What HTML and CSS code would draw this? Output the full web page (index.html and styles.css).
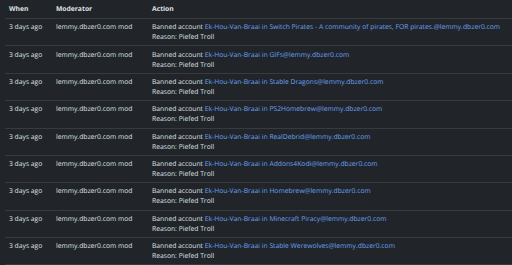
FILE: index.html
```html
<!DOCTYPE html>
<html>
<head>
<meta charset="utf-8">
<link rel="stylesheet" href="styles.css">
</head>
<body>
<table class="log">
<thead>
<tr><th class="c-when">When</th><th class="c-mod">Moderator</th><th class="c-act">Action</th></tr>
</thead>
<tbody>
<tr><td>3 days ago</td><td>lemmy.dbzer0.com mod</td><td>Banned account <a href="#">Ek-Hou-Van-Braai</a> <a href="#">in Switch Pirates - A community of pirates, FOR pirates.@lemmy.dbzer0.com</a><br>Reason: Piefed Troll</td></tr>
<tr><td>3 days ago</td><td>lemmy.dbzer0.com mod</td><td>Banned account <a href="#">Ek-Hou-Van-Braai</a> <a href="#">in GIFs@lemmy.dbzer0.com</a><br>Reason: Piefed Troll</td></tr>
<tr><td>3 days ago</td><td>lemmy.dbzer0.com mod</td><td>Banned account <a href="#">Ek-Hou-Van-Braai</a> <a href="#">in Stable Dragons@lemmy.dbzer0.com</a><br>Reason: Piefed Troll</td></tr>
<tr><td>3 days ago</td><td>lemmy.dbzer0.com mod</td><td>Banned account <a href="#">Ek-Hou-Van-Braai</a> <a href="#">in PS2Homebrew@lemmy.dbzer0.com</a><br>Reason: Piefed Troll</td></tr>
<tr><td>3 days ago</td><td>lemmy.dbzer0.com mod</td><td>Banned account <a href="#">Ek-Hou-Van-Braai</a> <a href="#">in RealDebrid@lemmy.dbzer0.com</a><br>Reason: Piefed Troll</td></tr>
<tr><td>3 days ago</td><td>lemmy.dbzer0.com mod</td><td>Banned account <a href="#">Ek-Hou-Van-Braai</a> <a href="#">in Addons4Kodi@lemmy.dbzer0.com</a><br>Reason: Piefed Troll</td></tr>
<tr><td>3 days ago</td><td>lemmy.dbzer0.com mod</td><td>Banned account <a href="#">Ek-Hou-Van-Braai</a> <a href="#">in Homebrew@lemmy.dbzer0.com</a><br>Reason: Piefed Troll</td></tr>
<tr><td>3 days ago</td><td>lemmy.dbzer0.com mod</td><td>Banned account <a href="#">Ek-Hou-Van-Braai</a> <a href="#">in Minecraft Piracy@lemmy.dbzer0.com</a><br>Reason: Piefed Troll</td></tr>
<tr><td>3 days ago</td><td>lemmy.dbzer0.com mod</td><td>Banned account <a href="#">Ek-Hou-Van-Braai</a> <a href="#">in Stable Werewolves@lemmy.dbzer0.com</a><br>Reason: Piefed Troll</td></tr>
</tbody>
</table>
</body>
</html>
```
FILE: styles.css
```css
html, body {
  margin: 0;
  padding: 0;
  background: #212529;
}
body {
  color: #dee2e6;
  font-family: "Open Sans", "Noto Sans", sans-serif;
  font-size: 6.75px;
  line-height: 10px;
  text-rendering: geometricPrecision;
}
.log {
  border-collapse: collapse;
  table-layout: fixed;
  margin-left: 5px;
  width: 507px;
}
.log th,
.log td {
  box-sizing: border-box;
  text-align: left;
  border-bottom: 1px solid #373b3e;
  white-space: nowrap;
}
.log th {
  font-weight: 700;
  padding: 4px 4px 4px;
}
.log td {
  padding: 3.2px 4px 3.2px;
  vertical-align: top;
}
.c-when { width: 47px; }
.c-mod { width: 96px; }
.log a {
  color: #6aa2f4;
  text-decoration: none;
}
```
